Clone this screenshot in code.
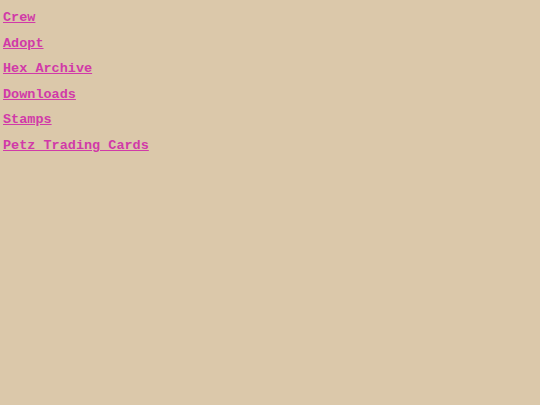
const links = ['Crew', 'Adopt', 'Hex Archive', 'Downloads', 'Stamps', 'Petz Trading Cards'];

export default function App() {
  return (
    <div className="min-h-screen bg-[#dbc8aa] px-[3px] pt-[5px] font-['Courier_New','Courier','Nimbus_Mono_PS','Liberation_Mono',monospace] text-[13.5px] font-bold">
      <ul>
        {links.map((l) => (
          <li key={l} className="leading-[25.6px]">
            <a href="#" className="text-[#d13aa8] underline">{l}</a>
          </li>
        ))}
      </ul>
    </div>
  );
}
